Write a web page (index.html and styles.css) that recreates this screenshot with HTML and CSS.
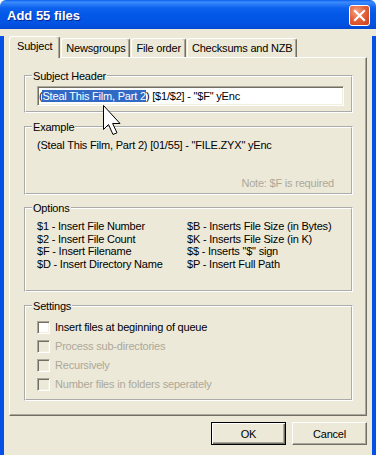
FILE: index.html
```html
<!DOCTYPE html>
<html>
    <head>
        <title>Add 55 files</title>
        <link rel="stylesheet" href="styles.css">
    </head>
    <body>
        <div class="window">
            <div class="titlebar">
                <span class="title">Add 55 files</span>
                <span class="close">
                    <svg width="19" height="19" viewBox="0 0 19 19">
                        <path d="M5 5 L14 14 M14 5 L5 14" stroke="#fff" stroke-width="2.2" stroke-linecap="square"/>
                    </svg>
                </span>
            </div>
            <div class="frame">
                <div class="tabs">
                    <div class="tab active">Subject</div>
                    <div class="tab">Newsgroups</div>
                    <div class="tab">File order</div>
                    <div class="tab">Checksums and NZB</div>
                </div>
                <div class="panel">
                    <fieldset class="group group_subject">
                        <legend>Subject Header</legend>
                        <div class="textbox">(<span class="sel">Steal This Film, Part 2</span>) [$1/$2] - "$F" yEnc</div>
                    </fieldset>
                    <fieldset class="group group_example">
                        <legend>Example</legend>
                        <p class="example">(Steal This Film, Part 2) [01/55] - "FILE.ZYX" yEnc</p>
                        <p class="note">Note: $F is required</p>
                    </fieldset>
                    <fieldset class="group group_options">
                        <legend>Options</legend>
                        <div class="options">
                            <span>$1 - Insert File Number</span>
                            <span>$B - Inserts File Size (in Bytes)</span>
                            <span>$2 - Insert File Count</span>
                            <span>$K - Inserts File Size (in K)</span>
                            <span>$F - Insert Filename</span>
                            <span>$$ - Inserts "$" sign</span>
                            <span>$D - Insert Directory Name</span>
                            <span>$P - Insert Full Path</span>
                        </div>
                    </fieldset>
                    <fieldset class="group group_settings">
                        <legend>Settings</legend>
                        <div class="check"><span class="box"></span>Insert files at beginning of queue</div>
                        <div class="check disabled"><span class="box"></span>Process sub-directories</div>
                        <div class="check disabled"><span class="box"></span>Recursively</div>
                        <div class="check disabled"><span class="box"></span>Number files in folders seperately</div>
                    </fieldset>
                </div>
                <div class="buttons">
                    <button class="btn btn_default">OK</button>
                    <button class="btn">Cancel</button>
                </div>
            </div>
            <svg class="cursor" width="19" height="31" viewBox="0 0 19 31">
                <path d="M0.5 0.5 V24.5 L5.5 19.5 L10 29.5 L14 27.8 L9.6 18.5 H17 Z" fill="#fff" stroke="#000" stroke-width="1" stroke-linejoin="miter"/>
            </svg>
        </div>
    </body>
</html>
```

FILE: styles.css
```css
body {
	margin: 0;
	background: #fff;
	font: 11px "Liberation Sans", Arial, sans-serif;
	letter-spacing: -0.2px;
	color: #000;
}
.window {
	position: relative;
	width: 376px;
	height: 455px;
	background: #ECE9D8;
	border-radius: 6px 6px 0 0;
	overflow: hidden;
}
.titlebar {
	height: 29px;
	box-sizing: border-box;
	padding: 1px 6px 0 7px;
	display: flex;
	align-items: center;
	justify-content: space-between;
	background: linear-gradient(to bottom, #0A5DEC 0, #3D8DFB 2px, #2C7DF8 4px, #0C62EE 8px, #0358E7 50%, #0254E3 80%, #0248D3 100%);
}
.title {
	font: bold 13px "Liberation Sans", Arial, sans-serif;
	letter-spacing: 0;
	color: #fff;
	text-shadow: 1px 1px #0A2590;
}
.close {
	width: 19px;
	height: 19px;
	border: 1px solid #fff;
	border-radius: 3px;
	background: radial-gradient(circle at 35% 30%, #F4A588 0, #E5623B 45%, #C7401C 100%);
	display: flex;
}

.frame {
	height: 426px;
	box-sizing: border-box;
	border: 4px solid #0550E6;
	border-top: none;
	border-bottom-color: #0A45D3;
}
.tabs {
	display: flex;
	align-items: flex-end;
	height: 21px;
	margin: 7px 5px 0 5px;
}
.tab {
	height: 19px;
	box-sizing: border-box;
	padding: 0 4px;
	margin-left: 1px;
	border: 1px solid;
	border-color: #fff #716F64 transparent #fff;
	border-bottom: none;
	border-radius: 3px 3px 0 0;
	box-shadow: inset -1px 0 #ACA899;
	line-height: 18px;
	white-space: nowrap;
}
.tab.active {
	position: relative;
	z-index: 1;
	height: 22px;
	margin: 0 0 -1px 0;
	padding: 0 7px;
	background: #ECE9D8;
	line-height: 19px;
}
.panel {
	height: 359px;
	box-sizing: border-box;
	margin: 0 5px;
	padding: 11px 13px 0 14px;
	border: 1px solid;
	border-color: #fff #716F64 #716F64 #fff;
	box-shadow: inset -1px -1px #ACA899;
}

.group {
	margin: 0;
	min-width: 0;
	padding: 0 7px 0 11px;
	border: 2px groove #fff;
}
.group legend {
	margin-left: -5px;
	padding: 0 1px;
	line-height: 14px;
}
.group_subject {
	padding-top: 3px;
	padding-bottom: 5px;
}
.group_example {
	margin-top: 7px;
	padding-top: 5px;
	padding-bottom: 3px;
}
.group_options {
	margin-top: 6px;
	padding-top: 5px;
	padding-bottom: 19px;
}
.group_settings {
	margin-top: 7px;
	padding-top: 5px;
	padding-bottom: 5px;
}

.textbox {
	width: 307px;
	height: 20px;
	box-sizing: border-box;
	background: #fff;
	border: 1px solid;
	border-color: #ACA899 #fff #fff #ACA899;
	box-shadow: inset 1px 1px #716F64, inset -1px -1px #F1EFE2;
	padding: 1px 0 0 1px;
	line-height: 16px;
	white-space: nowrap;
}
.sel {
	background: #316AC5;
	color: #fff;
}

.example, .note {
	margin: 0;
	line-height: 13px;
}
.note {
	margin-top: 25px;
	text-align: right;
	padding-right: 10px;
	color: #ACA899;
}

.options {
	display: grid;
	grid-template-columns: 150px 1fr;
	line-height: 12.67px;
	white-space: nowrap;
}

.check {
	display: flex;
	align-items: center;
	height: 19px;
	gap: 5px;
}
.box {
	width: 13px;
	height: 13px;
	box-sizing: border-box;
	background: #fff;
	border: 1px solid;
	border-color: #ACA899 #fff #fff #ACA899;
	box-shadow: inset 1px 1px #716F64, inset -1px -1px #F1EFE2;
}
.check.disabled {
	color: #ACA899;
}
.check.disabled .box {
	background: #ECE9D8;
}

.buttons {
	display: flex;
	justify-content: flex-end;
	gap: 6px;
	margin: 6px 5px 0 5px;
}
.btn {
	width: 75px;
	height: 23px;
	margin: 0;
	padding: 0;
	font: 11px "Liberation Sans", Arial, sans-serif;
	letter-spacing: -0.2px;
	color: #000;
	background: #ECE9D8;
	border: 1px solid;
	border-color: #fff #716F64 #716F64 #fff;
	box-shadow: inset -1px -1px #ACA899;
}
.btn_default {
	border-color: #000;
	box-shadow: inset 1px 1px #fff, inset -1px -1px #716F64, inset -2px -2px #ACA899;
}

.cursor {
	position: absolute;
	left: 103px;
	top: 105px;
}
```
